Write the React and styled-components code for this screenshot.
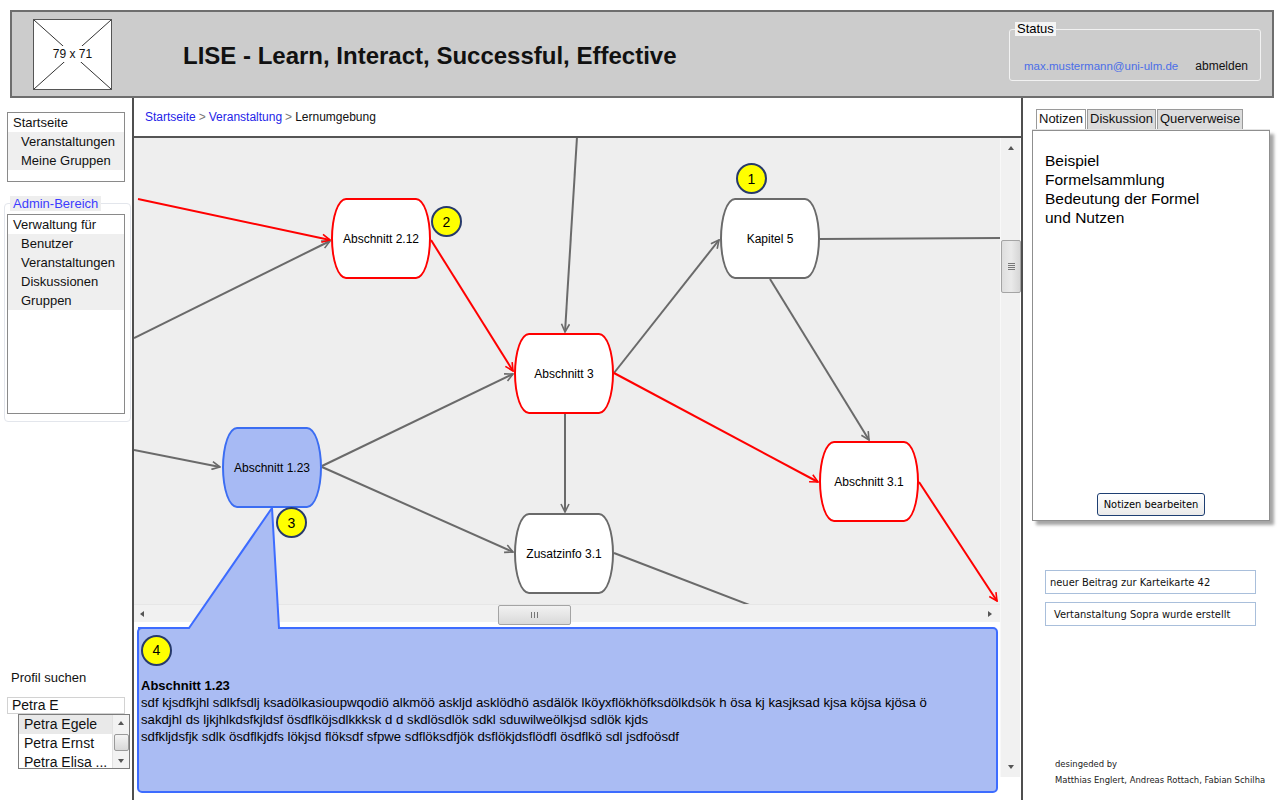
import React from "react";
import styled, { createGlobalStyle } from "styled-components";

// pane origin in page coordinates (diagram data is written in page coords)
const OX = 134;
const OY = 138;

const GlobalStyle = createGlobalStyle`
  html, body { margin: 0; padding: 0; background: #fff; }
  body { font-family: "Liberation Sans", Arial, sans-serif; color: #111; }
  * { box-sizing: border-box; }
`;

const Page = styled.div`
  width: 1280px;
  height: 800px;
  overflow: hidden;
  display: flex;
  flex-direction: column;
`;

/* ---------- header ---------- */
const Header = styled.header`
  margin: 10px 6px 0 10px;
  height: 88px;
  flex: none;
  background: #cccccc;
  border: 2px solid #6e6e6e;
  display: flex;
  align-items: center;
  padding: 0 11px 0 21px;
`;

const Logo = styled.div`
  width: 79px;
  height: 71px;
  background: #fff;
  border: 1px solid #555;
  position: relative;
  display: flex;
  align-items: center;
  justify-content: center;
  svg { position: absolute; inset: 0; }
  span {
    position: relative;
    background: #fff;
    font-size: 12px;
    padding: 1px 2px;
  }
`;

const Title = styled.h1`
  margin: 3px 0 0 71px;
  font-size: 24px;
  font-weight: bold;
  color: #111;
`;

const StatusSet = styled.fieldset`
  margin: 10px 0 0 auto;
  align-self: flex-start;
  width: 252px;
  border: 1px solid #f2f2f2;
  border-radius: 3px;
  padding: 0 12px 6px 4px;
  legend {
    padding: 0 2px;
    margin-left: 1px;
    background: #f4f4f4;
    font-size: 13px;
    line-height: 14px;
    color: #000;
  }
`;

const StatusRow = styled.div`
  width: 100%;
  display: flex;
  justify-content: space-between;
  align-items: center;
  padding: 22px 0 0 10px;
  font-size: 12px;
  line-height: 16px;
`;

const Mail = styled.span`
  color: #4a6ee8;
  font-size: 11.5px;
`;

/* ---------- main grid ---------- */
const Main = styled.div`
  flex: 1;
  display: grid;
  grid-template-columns: 132px 891px 1fr;
  min-height: 0;
`;

const LeftCol = styled.aside`
  display: flex;
  flex-direction: column;
  padding: 14px 0 31px 7px;
`;

const MenuBox = styled.div`
  width: 118px;
  height: ${(p) => p.$h}px;
  border: 1px solid #8a8a8a;
  font-size: 13px;
  line-height: 19px;
`;

const MenuHead = styled.div`
  padding-left: 5px;
`;

const MenuItem = styled.div`
  background: #efefef;
  padding-left: 13px;
`;

const AdminSet = styled.fieldset`
  margin: 14px 0 0 -3px;
  width: 127px;
  border: 1px solid #e3e6ec;
  border-radius: 4px;
  padding: 3px 0 7px 2px;
  legend {
    margin-left: 3px;
    padding: 0 3px;
    background: #eeeeee;
    color: #3d3dff;
    font-size: 13px;
    line-height: 15px;
  }
`;

const Search = styled.div`
  margin-top: auto;
  font-size: 13px;
`;

const SearchLabel = styled.div`
  padding-left: 4px;
  line-height: 16px;
`;

const SearchInput = styled.div`
  margin-top: 11px;
  width: 118px;
  height: 17px;
  border: 1px solid #d2d2d2;
  font-size: 14px;
  line-height: 15px;
  padding-left: 4px;
`;

const Suggest = styled.div`
  margin-left: 11px;
  width: 112px;
  height: 55px;
  border: 1px solid #7c7c7c;
  display: flex;
  overflow: hidden;
`;

const SuggestList = styled.div`
  flex: 1;
  font-size: 14px;
  line-height: 19px;
`;

const SuggestItem = styled.div`
  padding-left: 5px;
  background: ${(p) => (p.$active ? "#e9e9e9" : "transparent")};
  white-space: nowrap;
`;

const MiniBar = styled.div`
  width: 17px;
  background: #f2f2f2;
  border-left: 1px solid #e2e2e2;
  display: flex;
  flex-direction: column;
  align-items: center;
  justify-content: space-between;
  padding: 6px 0 5px;
`;

const MiniThumb = styled.div`
  width: 15px;
  height: 17px;
  border: 1px solid #9a9a9a;
  border-radius: 2px;
  background: linear-gradient(#f4f4f4, #d8d8d8);
`;

const Tri = styled.i`
  display: block;
  width: 0;
  height: 0;
  border: 3.5px solid transparent;
  ${(p) => p.$dir === "up" && "border-bottom: 4px solid #555; border-top-width: 0;"}
  ${(p) => p.$dir === "down" && "border-top: 4px solid #555; border-bottom-width: 0;"}
  ${(p) => p.$dir === "left" && "border-right: 4px solid #555; border-left-width: 0;"}
  ${(p) => p.$dir === "right" && "border-left: 4px solid #555; border-right-width: 0;"}
`;

/* ---------- centre ---------- */
const Center = styled.main`
  border-left: 2px solid #4f4f4f;
  border-right: 2px solid #4f4f4f;
  display: flex;
  flex-direction: column;
  min-height: 0;
`;

const Crumbs = styled.nav`
  height: 40px;
  flex: none;
  border-bottom: 2px solid #555;
  display: flex;
  align-items: center;
  padding: 0 0 1px 11px;
  font-size: 12px;
  a { color: #2424e8; text-decoration: none; }
  b { font-weight: normal; color: #777; margin: 0 3px; }
`;

const Pane = styled.div`
  position: relative;
  flex: 1;
  display: flex;
  align-items: flex-start;
`;

const Viewport = styled.div`
  width: 866px;
  display: flex;
  flex-direction: column;
`;

const Canvas = styled.div`
  position: relative;
  height: 466px;
  background: #eeeeee;
  overflow: hidden;
  svg { position: absolute; inset: 0; }
`;

const HBar = styled.div`
  height: 18px;
  background: #f1f1f1;
  border-top: 1px solid #e6e6e6;
  display: flex;
  align-items: center;
  justify-content: space-between;
  padding: 0 8px 0 6px;
  position: relative;
`;

const HThumb = styled.div`
  position: absolute;
  left: 364px;
  top: 0;
  width: 73px;
  height: 20px;
  border: 1px solid #a4a4a4;
  border-radius: 2px;
  background: linear-gradient(#f2f2f2, #d9d9d9);
  display: flex;
  align-items: center;
  justify-content: center;
  gap: 2px;
  i { width: 1px; height: 6px; background: #777; }
`;

const VBar = styled.div`
  width: 20px;
  height: 639px;
  background: #f1f1f1;
  border-left: 1px solid #f8f8f8;
  display: flex;
  flex-direction: column;
  align-items: center;
  padding: 8px 0 8px;
  position: relative;
`;

const VThumb = styled.div`
  position: absolute;
  left: 0;
  top: 102px;
  width: 20px;
  height: 53px;
  border: 1px solid #a4a4a4;
  border-radius: 2px;
  background: linear-gradient(90deg, #dedede, #eaeaea 50%, #d6d6d6);
  display: flex;
  flex-direction: column;
  align-items: center;
  justify-content: center;
  gap: 1px;
  i { width: 7px; height: 1px; background: #777; }
`;

const VDown = styled.div`
  margin-top: auto;
`;

const Node = styled.div`
  position: absolute;
  left: ${(p) => p.$x - OX}px;
  top: ${(p) => p.$y - OY}px;
  width: 100px;
  height: 81px;
  border-radius: 15px / 50%;
  border: 2px solid ${(p) => ({ red: "#ff0000", gray: "#6a6a6a", blue: "#3b6df2" }[p.$kind])};
  background: ${(p) => (p.$kind === "blue" ? "#a7baf4" : "#ffffff")};
  display: flex;
  align-items: center;
  justify-content: center;
  font-size: 12px;
  color: #000;
`;

const Badge = styled.div`
  position: ${(p) => (p.$flow ? "static" : "absolute")};
  left: ${(p) => p.$cx - OX - 15}px;
  top: ${(p) => p.$cy - OY - 15}px;
  width: 31px;
  height: 31px;
  border-radius: 50%;
  background: #ffff00;
  border: 2px solid #273a6b;
  display: flex;
  align-items: center;
  justify-content: center;
  font-size: 14px;
  color: #000;
  z-index: 3;
`;

const Callout = styled.div`
  position: absolute;
  left: 3px;
  top: 489px;
  width: 861px;
  height: 166px;
  background: #aabcf3;
  border: 2px solid #3d6cff;
  border-radius: 5px;
  padding: 6px 2px 0;
  font-size: 13.2px;
  line-height: 17px;
  color: #000;
  z-index: 1;
  h3 { margin: 11px 0 0; font-size: 13px; line-height: 17px; }
  p { margin: 0; }
`;

const Tail = styled.svg`
  position: absolute;
  left: 0;
  top: 0;
  z-index: 2;
  pointer-events: none;
`;

/* ---------- right column ---------- */
const RightCol = styled.aside`
  display: flex;
  flex-direction: column;
  padding: 11px 10px 12px 9px;
`;

const Tabs = styled.div`
  display: flex;
  padding-left: 4px;
  border-bottom: 1px solid #e4e4e4;
  height: 21px;
`;

const Tab = styled.div`
  height: 20px;
  margin-right: 1px;
  padding: 1px 2px 0;
  font-size: 13px;
  line-height: 16px;
  border: 1px solid #9a9a9a;
  border-bottom: none;
  background: ${(p) => (p.$active ? "#ffffff" : "#dcdcdc")};
`;

const Notes = styled.section`
  width: 238px;
  height: 391px;
  border: 1px solid #8f8f8f;
  box-shadow: 4px 4px 3px #a6a6a6;
  display: flex;
  flex-direction: column;
  align-items: center;
  padding: 20px 0 4px;
`;

const NotesText = styled.div`
  align-self: stretch;
  padding-left: 12px;
  font-size: 15.5px;
  line-height: 19px;
  color: #000;
`;

const EditButton = styled.button`
  margin-top: auto;
  width: 108px;
  height: 23px;
  border: 1px solid #1e3f72;
  border-radius: 3px;
  background: linear-gradient(#ffffff, #eaeaea);
  font-family: "DejaVu Sans Condensed", "Liberation Sans", sans-serif;
  font-size: 11px;
  color: #000;
  padding: 0;
`;

const Notice = styled.div`
  margin: ${(p) => p.$mt}px 0 0 13px;
  width: 211px;
  height: 24px;
  border: 1px solid #a9bfdb;
  display: flex;
  align-items: center;
  padding-left: ${(p) => p.$pad}px;
  font-family: "DejaVu Sans Condensed", "Liberation Sans", sans-serif;
  font-size: 11px;
  color: #111;
`;

const Credits = styled.footer`
  margin-top: auto;
  padding-left: 23px;
  font-family: "DejaVu Sans Condensed", "Liberation Sans", sans-serif;
  font-size: 9.4px;
  line-height: 16px;
  color: #222;
`;

/* ---------- data ---------- */
const nodes = [
  { x: 331, y: 198, kind: "red", label: "Abschnitt 2.12" },
  { x: 720, y: 198, kind: "gray", label: "Kapitel 5" },
  { x: 514, y: 333, kind: "red", label: "Abschnitt 3" },
  { x: 222, y: 427, kind: "blue", label: "Abschnitt 1.23" },
  { x: 819, y: 441, kind: "red", label: "Abschnitt 3.1" },
  { x: 514, y: 513, kind: "gray", label: "Zusatzinfo 3.1" },
];

const edges = [
  { c: "g", a: [134, 338], b: [330, 241], arrow: true },
  { c: "g", a: [577, 137], b: [565, 332], arrow: true },
  { c: "g", a: [614, 373], b: [719, 240], arrow: true },
  { c: "g", a: [820, 239], b: [1000, 238] },
  { c: "g", a: [770, 279], b: [869, 440], arrow: true },
  { c: "g", a: [565, 414], b: [565, 512], arrow: true },
  { c: "g", a: [322, 466], b: [513, 374], arrow: true },
  { c: "g", a: [134, 450], b: [220, 467], arrow: true },
  { c: "g", a: [322, 467], b: [513, 552], arrow: true },
  { c: "g", a: [614, 553], b: [752, 606] },
  { c: "r", a: [138, 199], b: [330, 240], arrow: true },
  { c: "r", a: [431, 240], b: [513, 371], arrow: true },
  { c: "r", a: [614, 373], b: [818, 482], arrow: true },
  { c: "r", a: [919, 482], b: [997, 601], arrow: true },
];

const stroke = { g: "#6a6a6a", r: "#ff0000" };

const Graph = () => (
  <Canvas>
    <svg width="866" height="466" viewBox={`${OX} ${OY} 866 466`}>
      <defs>
        {Object.entries(stroke).map(([k, col]) => (
          <marker
            key={k}
            id={`arr-${k}`}
            viewBox="0 0 10 10"
            refX="9"
            refY="5"
            markerWidth="10"
            markerHeight="10"
            markerUnits="userSpaceOnUse"
            orient="auto"
          >
            <path d="M1,1 L9,5 L1,9" fill="none" stroke={col} strokeWidth="1.6" />
          </marker>
        ))}
      </defs>
      {edges.map((e, i) => (
        <line
          key={i}
          x1={e.a[0]}
          y1={e.a[1]}
          x2={e.b[0]}
          y2={e.b[1]}
          stroke={stroke[e.c]}
          strokeWidth="2"
          markerEnd={e.arrow ? `url(#arr-${e.c})` : undefined}
        />
      ))}
    </svg>
    {nodes.map((n) => (
      <Node key={n.label} $x={n.x} $y={n.y} $kind={n.kind}>
        {n.label}
      </Node>
    ))}
  </Canvas>
);

export default function App() {
  return (
    <Page>
      <GlobalStyle />
      <Header>
        <Logo>
          <svg width="77" height="69" viewBox="0 0 77 69">
            <line x1="0" y1="0" x2="77" y2="69" stroke="#333" strokeWidth="1" />
            <line x1="77" y1="0" x2="0" y2="69" stroke="#333" strokeWidth="1" />
          </svg>
          <span>79 x 71</span>
        </Logo>
        <Title>LISE - Learn, Interact, Successful, Effective</Title>
        <StatusSet>
          <legend>Status</legend>
          <StatusRow>
            <Mail>max.mustermann@uni-ulm.de</Mail>
            <span>abmelden</span>
          </StatusRow>
        </StatusSet>
      </Header>

      <Main>
        <LeftCol>
          <MenuBox $h={70}>
            <MenuHead>Startseite</MenuHead>
            <MenuItem>Veranstaltungen</MenuItem>
            <MenuItem>Meine Gruppen</MenuItem>
          </MenuBox>
          <AdminSet>
            <legend>Admin-Bereich</legend>
            <MenuBox $h={200}>
              <MenuHead>Verwaltung für</MenuHead>
              <MenuItem>Benutzer</MenuItem>
              <MenuItem>Veranstaltungen</MenuItem>
              <MenuItem>Diskussionen</MenuItem>
              <MenuItem>Gruppen</MenuItem>
            </MenuBox>
          </AdminSet>
          <Search>
            <SearchLabel>Profil suchen</SearchLabel>
            <SearchInput>Petra E</SearchInput>
            <Suggest>
              <SuggestList>
                <SuggestItem $active>Petra Egele</SuggestItem>
                <SuggestItem>Petra Ernst</SuggestItem>
                <SuggestItem>Petra Elisa ...</SuggestItem>
              </SuggestList>
              <MiniBar>
                <Tri $dir="up" />
                <MiniThumb />
                <Tri $dir="down" />
              </MiniBar>
            </Suggest>
          </Search>
        </LeftCol>

        <Center>
          <Crumbs>
            <a>Startseite</a>
            <b>&gt;</b>
            <a>Veranstaltung</a>
            <b>&gt;</b>
            <span>Lernumgebung</span>
          </Crumbs>
          <Pane>
            <Viewport>
              <Graph />
              <HBar>
                <Tri $dir="left" />
                <HThumb>
                  <i />
                  <i />
                  <i />
                </HThumb>
                <Tri $dir="right" />
              </HBar>
            </Viewport>
            <VBar>
              <Tri $dir="up" />
              <VThumb>
                <i />
                <i />
                <i />
                <i />
              </VThumb>
              <VDown>
                <Tri $dir="down" />
              </VDown>
            </VBar>

            <Callout>
              <Badge $flow>4</Badge>
              <h3>Abschnitt 1.23</h3>
              <p>
                sdf kjsdfkjhl sdlkfsdlj ksadölkasioupwqodiö alkmöö askljd asklödhö asdälök
                lköyxflökhöfksdölkdsök h ösa kj kasjksad kjsa köjsa kjösa ö
              </p>
              <p>sakdjhl ds ljkjhlkdsfkjldsf ösdflköjsdlkkksk d d skdlösdlök sdkl sduwilweölkjsd sdlök kjds</p>
              <p>
                sdfkljdsfjk sdlk ösdflkjdfs lökjsd flöksdf sfpwe sdflöksdfjök dsflökjdsflödfl ösdflkö sdl
                jsdfoösdf
              </p>
            </Callout>
            <Tail width="300" height="500" viewBox={`${OX} ${OY} 300 500`}>
              <polygon points="272,508 189,628 189,630 279,630 279,628" fill="#aabcf3" />
              <polyline points="272,508 189,628 138,628" fill="none" stroke="#3d6cff" strokeWidth="2" />
              <polyline points="272,508 279,628 300,628" fill="none" stroke="#3d6cff" strokeWidth="2" />
            </Tail>

            <Badge $cx={751} $cy={178}>1</Badge>
            <Badge $cx={446} $cy={221}>2</Badge>
            <Badge $cx={291} $cy={522}>3</Badge>
          </Pane>
        </Center>

        <RightCol>
          <Tabs>
            <Tab $active>Notizen</Tab>
            <Tab>Diskussion</Tab>
            <Tab>Querverweise</Tab>
          </Tabs>
          <Notes>
            <NotesText>
              Beispiel
              <br />
              Formelsammlung
              <br />
              Bedeutung der Formel
              <br />
              und Nutzen
            </NotesText>
            <EditButton>Notizen bearbeiten</EditButton>
          </Notes>
          <Notice $mt={49} $pad={4}>neuer Beitrag zur Karteikarte 42</Notice>
          <Notice $mt={8} $pad={8}>Vertanstaltung Sopra wurde erstellt</Notice>
          <Credits>
            desingeded by
            <br />
            Matthias Englert, Andreas Rottach, Fabian Schilha
          </Credits>
        </RightCol>
      </Main>
    </Page>
  );
}
